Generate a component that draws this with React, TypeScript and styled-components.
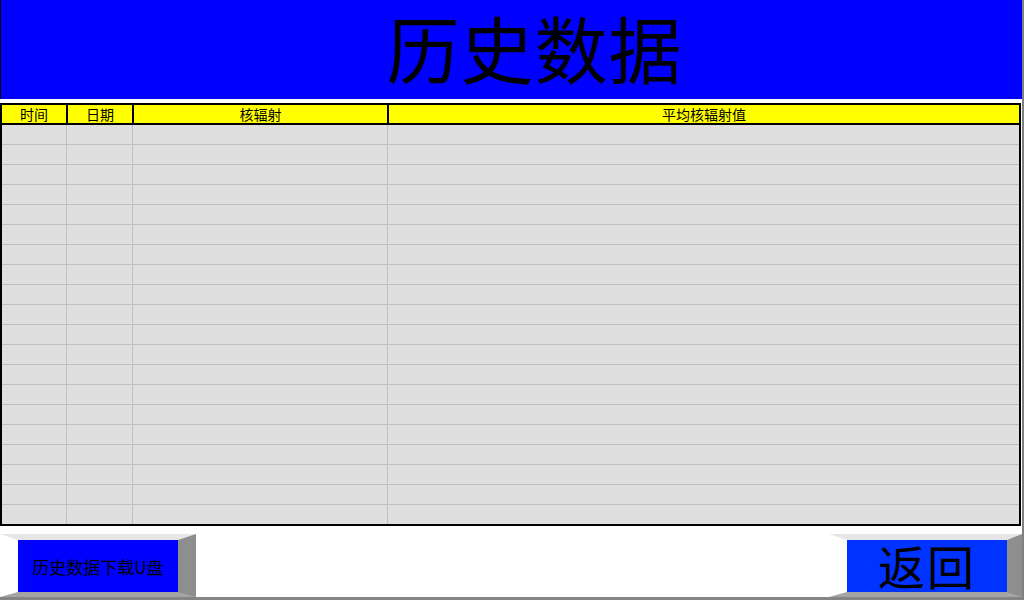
import styled, { createGlobalStyle } from "styled-components";

const GlobalStyle = createGlobalStyle`
  html, body {
    margin: 0;
    padding: 0;
    background: #ffffff;
  }
`;

const ScScreen = styled.div`
  width: 1024px;
  height: 600px;
  box-sizing: border-box;
  border-right: 2px solid #808080;
  border-bottom: 3px solid #858585;
  display: flex;
  flex-direction: column;
  background: #ffffff;
  font-family: "Noto Sans CJK SC", "Liberation Serif", serif;
  overflow: hidden;
`;

const ScTitleBar = styled.header`
  height: 99px;
  flex-shrink: 0;
  box-sizing: border-box;
  background: #0000ff;
  border-left: 1px solid #000000;
  padding: 0 0 6px 46px;
  display: flex;
  align-items: center;
  justify-content: center;
`;

const ScTitle = styled.h1`
  margin: 0;
  font-size: 73px;
  font-weight: 400;
  line-height: 1.2;
  color: #000000;
  letter-spacing: 1px;
`;

const ScTable = styled.div`
  margin-top: 4px;
  width: 1021px;
  box-sizing: border-box;
  border: 2px solid #000000;
  background: #dfdfdf;
`;

const ScHeadRow = styled.div`
  display: grid;
  grid-template-columns: 64px 64px 253px 1fr;
  column-gap: 2px;
  background: #000000;
  border-bottom: 2px solid #000000;
`;

const ScHeadCell = styled.div`
  height: 18px;
  background: #ffff00;
  font-family: "Noto Sans CJK SC", sans-serif;
  font-size: 14px;
  line-height: 18px;
  text-align: center;
  color: #000000;
`;

const ScRow = styled.div<{ $first?: boolean }>`
  display: grid;
  grid-template-columns: 64px 65px 254px 1fr;
  column-gap: 1px;
  background: #c0c0c0;
  border-top: ${(p) => (p.$first ? "none" : "1px solid #c0c0c0")};
`;

const ScCell = styled.div`
  height: 19px;
  background: #dfdfdf;
`;

const ScFooter = styled.footer`
  margin-top: auto;
  display: flex;
  justify-content: space-between;
  align-items: flex-end;
`;

const ScBevelButton = styled.button<{ $face: string; $big?: boolean; $right: number }>`
  box-sizing: content-box;
  width: 160px;
  height: ${(p) => (p.$big ? "48px" : "52px")};
  padding: 0 0 ${(p) => (p.$big ? "4px" : "0")};
  margin: 0;
  border-style: solid;
  border-width: 6px ${(p) => p.$right}px 5px 18px;
  border-color: #e6e6e6 #8e8e8e #a4a4a4 #ffffff;
  background: ${(p) => p.$face};
  color: #000000;
  font-family: "Noto Sans CJK SC", "Liberation Serif", serif;
  font-size: ${(p) => (p.$big ? "47px" : "17px")};
  line-height: 1;
  letter-spacing: ${(p) => (p.$big ? "2px" : "0")};
  display: flex;
  align-items: center;
  justify-content: center;
  cursor: pointer;
  white-space: nowrap;
`;

const columns = ["时间", "日期", "核辐射", "平均核辐射值"];
const rows = Array.from({ length: 20 }, (_, i) => i);

export default function App() {
  return (
    <>
      <GlobalStyle />
      <ScScreen>
        <ScTitleBar>
          <ScTitle>历史数据</ScTitle>
        </ScTitleBar>
        <ScTable>
          <ScHeadRow>
            {columns.map((c) => (
              <ScHeadCell key={c}>{c}</ScHeadCell>
            ))}
          </ScHeadRow>
          {rows.map((r) => (
            <ScRow key={r} $first={r === 0}>
              {columns.map((c) => (
                <ScCell key={c} />
              ))}
            </ScRow>
          ))}
        </ScTable>
        <ScFooter>
          <ScBevelButton $face="#0000ff" $right={18}>
            历史数据下载U盘
          </ScBevelButton>
          <ScBevelButton $face="#0033ff" $right={15} $big>
            返回
          </ScBevelButton>
        </ScFooter>
      </ScScreen>
    </>
  );
}
